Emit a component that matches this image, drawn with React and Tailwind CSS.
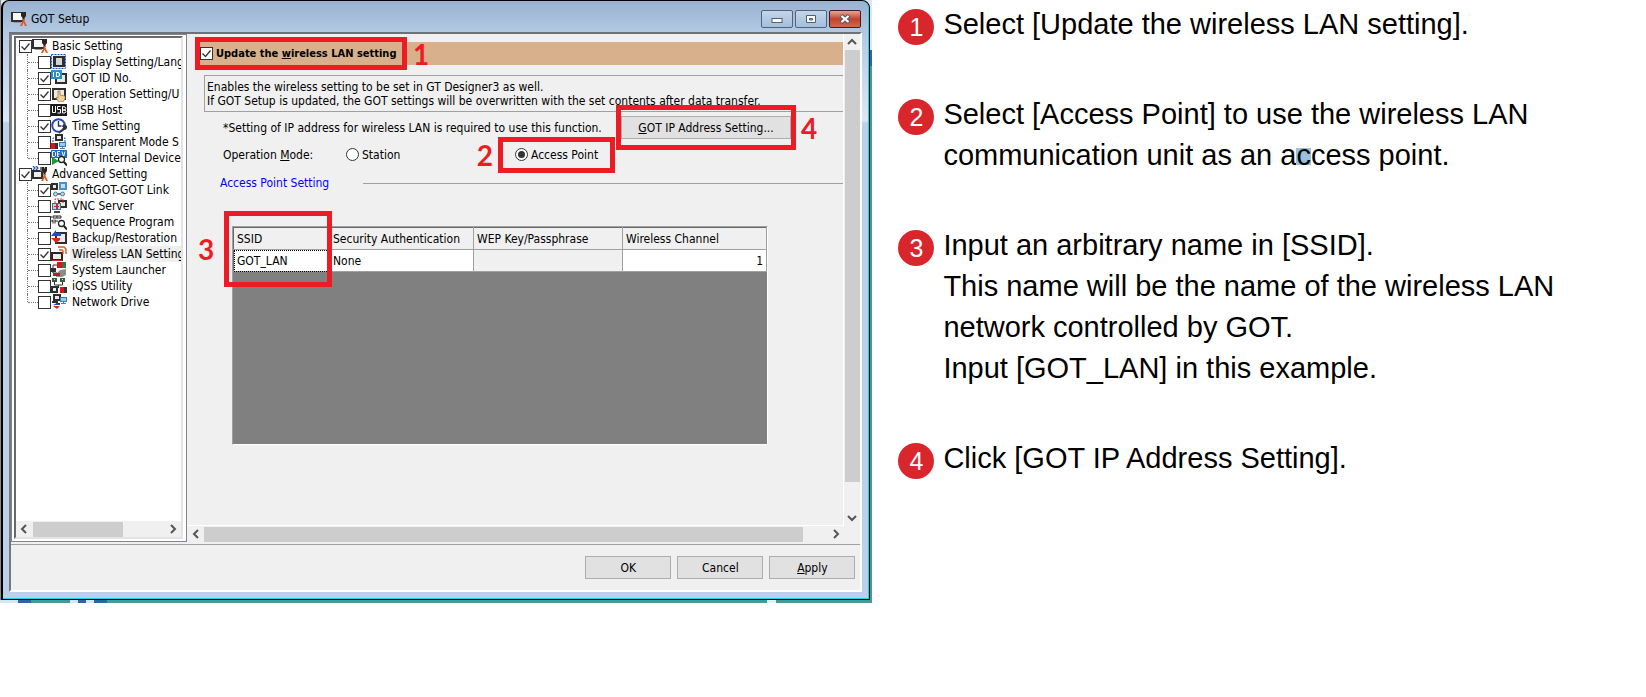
import React, { useState } from "react";
import clsx from "clsx";

// ------ tree icons (16 x 16) ------ //

const Got = ({ x = 1, y = 2, w = 13, h = 10 }) => (
  <>
    <rect x={x} y={y} width={w} height={h} fill="#2e2e2e" />
    <rect x={x + 2} y={y + 2} width={w - 4} height={h - 4} fill="#e9e9e9" />
  </>
);

const Wrench = ({ x = 8 }) => (
  <g transform={`translate(${x} 1)`}>
    <path d="M1 0h2v2h1v-2h2v4l-1.500 2v2h-2v-2l-1.500-2z" fill="#2b2320" />
    <path d="M2.500 7h2v2l2.500 5h-2l-1.500-3.500-1.500 3.500h-2l2.500-5z" fill="#e8501c" />
  </g>
);

const Lens = () => (
  <g>
    <circle cx="10.500" cy="9.500" r="3" fill="#fff" stroke="#222" strokeWidth="1.300" />
    <path d="M13 12l3 3.500" stroke="#222" strokeWidth="2" />
  </g>
);

const Pc = ({ x = 9, y = 8 }) => (
  <g transform={`translate(${x} ${y})`}>
    <rect width="7" height="5" fill="#3d78b8" />
    <rect x="1" y="1" width="5" height="3" fill="#8cd0f7" />
    <path d="M3 5h1v1h2v1h-5v-1h2z" fill="#6b7683" />
  </g>
);

const icons = {
  setup: (
    <>
      <path d="M0 1h13v10h-13z" fill="#2e2e2e" />
      <path d="M2 2h10v7h-10z" fill="#f6f6f6" />
      <path d="M2 11h8v1h-7z" fill="#9a9a9a" />
      <Wrench x={9} />
    </>
  ),
  advanced: (
    <>
      <path d="M0 4h11v9h-11z" fill="#2e2e2e" />
      <path d="M2 6h7v5h-7z" fill="#eee" />
      <path d="M1 0l2 2-2 2M4 0l2 2-2 2" fill="none" stroke="#1a49d6" strokeWidth="1.200" />
      <path d="M8 1l4 0 3 3-3 2-4-1z" fill="#7a746e" />
      <Wrench x={9} />
    </>
  ),
  display: (
    <>
      <rect x="0.500" y="0.500" width="14" height="14" fill="#e4ecff" stroke="#1b4fd8" strokeDasharray="2 1" />
      <rect x="2" y="2" width="12" height="11" fill="#2e2e2e" />
      <rect x="5" y="4" width="6" height="7" fill="#d5d5d5" />
    </>
  ),
  id: (
    <>
      <Got x={4} y={3} w={12} h={11} />
      <rect width="11" height="9" fill="#2c8fc9" />
      <path d="M2 2h1v5h-1zM5 2h2.500l1.500 1.500v2l-1.500 1.500h-2.500zM6 3v3h1.200l.8-.8v-1.400l-.8-.8z" fill="#fff" />
    </>
  ),
  operation: (
    <>
      <Got x={1} y={2} w={14} h={12} />
      <path d="M7 5h2v4l5 1v3l-2 3h-4l-3-4 1-1 1 1z" fill="#f7cf9b" stroke="#9c6a2e" strokeWidth="0.700" />
    </>
  ),
  usb: (
    <>
      <rect y="2" width="16" height="12" fill="#1c1c1c" />
      <path
        d="M1.500 4v6.500h3V4M9.500 4.500h-3v3h3v3.500h-3M11.500 4.500v6.500h2.500l1-1.500-1-1.500h-2.500 2.500l.8-1.500-.8-1.500z"
        fill="none"
        stroke="#fff"
      />
    </>
  ),
  time: (
    <>
      <circle cx="7.500" cy="7.500" r="6.300" fill="#fff" stroke="#2a49bd" strokeWidth="2" />
      <path d="M7.500 3v5h3" fill="none" stroke="#1f2f77" strokeWidth="1.400" />
      <path d="M8 15l5-5M12 8l1-1 3 2-2 2z" stroke="#333" strokeWidth="1.600" fill="#333" />
    </>
  ),
  transparent: (
    <>
      <path d="M2 8v-4h12v4" fill="none" stroke="#1b4fd8" strokeDasharray="2 1" />
      <Got x={4} y={0} w={8} h={7} />
      <rect y="9" width="4" height="6" fill="#d8141c" />
      <rect x="4" y="9" width="3" height="6" fill="#333" />
      <Pc x={8} y={8} />
    </>
  ),
  device: (
    <>
      <rect width="16" height="8" fill="#1c6fc7" />
      <path
        d="M1.500 1.500v5h2l1-1v-3l-1-1zM9 1.500h-2.500v5h2.500M6.500 4h2M11 1.500l1.500 5 1.500-5"
        fill="none"
        stroke="#fff"
      />
      <path d="M1 7l7 4-7 4z" fill="#1a9b35" />
      <Lens />
    </>
  ),
  link: (
    <>
      <Got x={0} y={1} w={7} h={7} />
      <rect x="8" y="0" width="8" height="8" fill="#4b8fce" />
      <rect x="10" y="2" width="4" height="4" fill="#b9e4ff" />
      <path d="M3 12h10" stroke="#56748f" strokeWidth="2" />
      <circle cx="4.500" cy="12" r="2" fill="#b9d5e6" stroke="#56748f" />
      <circle cx="11.500" cy="12" r="2" fill="#b9d5e6" stroke="#56748f" />
    </>
  ),
  vnc: (
    <>
      <Got x={7} y={2} w={9} h={8} />
      <path d="M4 5v-4h8v4" fill="none" stroke="#e22" strokeDasharray="2 1" />
      <rect x="1" y="5" width="9" height="7" fill="#4a6b8e" />
      <rect x="2" y="6" width="7" height="5" fill="#9edcff" />
      <path d="M5 6h2v5h-2zM3 8h5v1h-5z" fill="#d22" />
      <path d="M3 13h6v2h-6z" fill="#444" />
    </>
  ),
  sequence: (
    <>
      <path d="M0 3h3M5 3h2M9 3h2M0 7h2M4 7h3M3 1v4M5 1v4M7 1v4M9 1v4M2 5.500v4M4 5.500v4" stroke="#222" />
      <Lens />
    </>
  ),
  backup: (
    <>
      <Got x={4} y={2} w={12} h={12} />
      <path d="M0 6l5-6v3h5v3z" fill="#1b4fd8" />
      <path d="M0 8h9v2l-4 3z" fill="#e0251b" />
    </>
  ),
  wireless: (
    <>
      <rect y="6" width="12" height="9" fill="#2e2226" />
      <rect x="2" y="8" width="8" height="5" fill="#f5eaea" />
      <rect x="1" y="14" width="10" height="1" fill="#c22a2a" />
      <path d="M7 1h6l2 2v5M8 4h3l1 1v3" fill="none" stroke="#e8501c" strokeWidth="1.400" />
    </>
  ),
  launcher: (
    <>
      <path d="M2 3h5M2 3v8h4" stroke="#333" fill="none" />
      <path d="M0 6h5v4h-5z" fill="#2e2e2e" />
      <rect x="6" y="0" width="5" height="6" fill="#d8141c" />
      <rect x="11" y="0" width="4" height="6" fill="#2f7b3d" />
      <path d="M5 12l4-4 6-1v6l-4 2h-6z" fill="#8b8b8b" />
      <rect x="2" y="11" width="7" height="3" fill="#b3202a" />
    </>
  ),
  iqss: (
    <>
      <rect x="1" y="0" width="5" height="4" fill="#345d44" />
      <rect x="9" y="0" width="5" height="4" fill="#345d44" />
      <path d="M3 1h1v1h-1zM11 1h1v1h-1z" fill="#cfe9d6" />
      <path d="M3.500 4v3h8v-3M7.500 7v3" fill="none" stroke="#333" />
      <Got x={0} y={8} w={7} h={7} />
      <rect x="9" y="9" width="4" height="6" fill="#d8141c" />
      <rect x="13" y="9" width="3" height="6" fill="#333" />
    </>
  ),
  network: (
    <>
      <Got x={2} y={0} w={8} h={7} />
      <path d="M1 8h5v2h3" fill="none" stroke="#333" strokeWidth="2" />
      <Pc x={9} y={3} />
      <path d="M2 11h7l-3-2z" fill="#1b4fd8" />
      <path d="M2 12h7l-3 3z" fill="#e0251b" />
    </>
  ),
};

const Icon = ({ name }) => (
  <svg viewBox="0 0 16 16" className="size-4 shrink-0" aria-hidden="true">
    {icons[name]}
  </svg>
);

// ------ data ------ //

const tree = [
  {
    title: "Basic Setting",
    icon: "setup",
    items: [
      { label: "Display Setting/Lang", icon: "display", checked: false },
      { label: "GOT ID No.", icon: "id", checked: true },
      { label: "Operation Setting/U", icon: "operation", checked: true },
      { label: "USB Host", icon: "usb", checked: false },
      { label: "Time Setting", icon: "time", checked: true },
      { label: "Transparent Mode S", icon: "transparent", checked: false },
      { label: "GOT Internal Device", icon: "device", checked: false },
    ],
  },
  {
    title: "Advanced Setting",
    icon: "advanced",
    items: [
      { label: "SoftGOT-GOT Link", icon: "link", checked: true },
      { label: "VNC Server", icon: "vnc", checked: false },
      { label: "Sequence Program", icon: "sequence", checked: false },
      { label: "Backup/Restoration", icon: "backup", checked: false },
      { label: "Wireless LAN Setting", icon: "wireless", checked: true, active: true },
      { label: "System Launcher", icon: "launcher", checked: false },
      { label: "iQSS Utility", icon: "iqss", checked: false },
      { label: "Network Drive", icon: "network", checked: false },
    ],
  },
];

const steps = [
  ["Select [Update the wireless LAN setting]."],
  [
    "Select [Access Point] to use the wireless LAN",
    <>
      communication unit as an a<span className="bg-[linear-gradient(#9bc1dc,#9bc1dc)] bg-[length:100%_17px] bg-[position:0_9px] bg-no-repeat">c</span>cess point.
    </>,
  ],
  [
    "Input an arbitrary name in [SSID].",
    "This name will be the name of the wireless LAN",
    "network controlled by GOT.",
    "Input [GOT_LAN] in this example.",
  ],
  ["Click [GOT IP Address Setting]."],
];

// ------ small controls ------ //

const Check = ({ checked }) => (
  <span className="grid size-[13px] shrink-0">
    <input
      type="checkbox"
      defaultChecked={checked}
      className="peer col-start-1 row-start-1 size-[13px] appearance-none border border-[#333] bg-white"
    />
    <svg
      viewBox="0 0 13 13"
      className="pointer-events-none invisible col-start-1 row-start-1 size-[13px] peer-checked:visible"
    >
      <path d="M2.500 6.500l3 3 5-6" fill="none" stroke="#333" strokeWidth="1.300" />
    </svg>
  </span>
);

const Radio = ({ label, value, mode, setMode }) => (
  <label className="flex items-center gap-[3px]">
    <span className="grid size-[13px] place-items-center rounded-full border border-[#333] bg-white">
      <input
        type="radio"
        name="mode"
        value={value}
        checked={mode === value}
        onChange={() => setMode(value)}
        className="size-[7px] appearance-none rounded-full checked:bg-[#333]"
      />
    </span>
    {label}
  </label>
);

const arrows = {
  left: "M10 4l-4 4 4 4",
  right: "M6 4l4 4-4 4",
  up: "M4 10l4-4 4 4",
  down: "M4 6l4 4 4-4",
};

const Arrow = ({ dir }) => (
  <button type="button" aria-label={`Scroll ${dir}`} className="size-4 shrink-0">
    <svg viewBox="0 0 16 16" className="size-4">
      <path d={arrows[dir]} fill="none" stroke="#555" strokeWidth="2" />
    </svg>
  </button>
);

const Button = ({ children, className }) => (
  <button
    type="button"
    className={clsx("h-[23px] border border-[#adadad] bg-[#e1e1e1] text-center", className)}
  >
    {children}
  </button>
);

// red frame and number over the part that a step talks about
const Callout = ({ n, frame, number, className, children }) => (
  <div className={clsx("relative", className)}>
    {children}
    <span className={clsx("pointer-events-none absolute z-10 border-[5px] border-[#ed1c24]", frame)} />
    <span
      className={clsx(
        "absolute z-10 font-['Lato',sans-serif] text-[28px] leading-7 font-bold text-[#ed1c24]",
        number
      )}
    >
      {n}
    </span>
  </div>
);

// ------ window parts ------ //

const TitleBar = () => (
  <div className="flex h-[31px] items-center pt-[5px] pr-px pl-[2px]">
    <Icon name="setup" />
    <h1 className="ml-1 flex-1">GOT Setup</h1>
    <div className="flex gap-[2px]">
      <button
        type="button"
        aria-label="Minimize"
        className="grid h-[18px] w-8 place-items-center rounded-xs border border-[#53627a] bg-linear-to-b from-[#c3d6ea] via-[#b3c9e1] to-[#a3bfdd]"
      >
        <svg viewBox="0 0 12 12" className="size-3">
          <rect x="1" y="5.500" width="10" height="4" fill="#fff" stroke="#555d6b" />
        </svg>
      </button>
      <button
        type="button"
        aria-label="Maximize"
        className="grid h-[18px] w-8 place-items-center rounded-xs border border-[#53627a] bg-linear-to-b from-[#c3d6ea] via-[#b3c9e1] to-[#a3bfdd]"
      >
        <svg viewBox="0 0 12 12" className="size-3">
          <path d="M1.500 2.500h9v7h-9zM4.500 5.500h3v1.500h-3z" fill="#fff" fillRule="evenodd" stroke="#555d6b" />
        </svg>
      </button>
      <button
        type="button"
        aria-label="Close"
        className="grid h-[18px] w-8 place-items-center rounded-xs border border-[#4b1a20] bg-linear-to-b from-[#e5a296] via-[#c0432c] to-[#cf6a4d]"
      >
        <svg viewBox="0 0 12 12" className="size-3">
          <path d="M2 2.500l8 7M10 2.500l-8 7" stroke="#555d6b" strokeWidth="4.200" />
          <path d="M2.500 3l7 6M9.500 3l-7 6" stroke="#fff" strokeWidth="2.200" />
        </svg>
      </button>
    </div>
  </div>
);

const Tree = () => (
  <div className="w-[176px] shrink-0 border border-[#838390] bg-white p-[2px] pt-px">
    <div className="flex h-full w-[169px] flex-col border-2 border-t-[#696969] border-r-[#e3e3e3] border-b-[#e3e3e3] border-l-[#696969]">
      <ul className="flex-1 overflow-hidden whitespace-nowrap">
        {tree.map(({ title, icon, items }) => (
          <li key={title}>
            <label className="flex h-4 items-center pl-[3px]">
              <Check checked />
              <Icon name={icon} />
              <span className="ml-1">{title}</span>
            </label>
            <ul className="ml-[11px]">
              {items.map(({ label, icon, checked, active }) => (
                <li key={label} className="group flex h-4 items-center">
                  <span className="h-4 border-l border-dotted border-[#777] group-last:h-2 group-last:self-start" />
                  <span className="w-[10px] shrink-0 border-t border-dotted border-[#777]" />
                  <label className="flex h-4 flex-1 items-center">
                    <Check checked={checked} />
                    <Icon name={icon} />
                    <span className={clsx("ml-[3px] flex-1 pl-[2px] leading-4", active && "bg-[#efefef]")}>
                      {label}
                    </span>
                  </label>
                </li>
              ))}
            </ul>
          </li>
        ))}
      </ul>
      <div className="flex h-4 items-center bg-[#f0f0f0]">
        <Arrow dir="left" />
        <div className="flex-1 pl-px">
          <div className="h-[15px] w-[90px] bg-[#cdcdcd]" />
        </div>
        <Arrow dir="right" />
      </div>
    </div>
  </div>
);

const SsidTable = () => (
  <div className="h-[219px] w-[536px] border border-[#a0a0a0] border-r-white border-b-white bg-[#808080]">
    <table className="w-full table-fixed border-collapse border-t border-l border-[#696969] text-left">
      <thead>
        <tr className="h-[22px] bg-[#f0f0f0]">
          <th className="w-[97px] border-r border-b border-[#a0a0a0] pl-[3px] font-normal">SSID</th>
          <th className="w-[143px] border-r border-b border-[#a0a0a0] pl-[2px] font-normal">
            Security Authentication
          </th>
          <th className="w-[149px] border-r border-b border-[#a0a0a0] pl-[3px] font-normal">
            WEP Key/Passphrase
          </th>
          <th className="border-r border-b border-[#a0a0a0] pl-[3px] font-normal">Wireless Channel</th>
        </tr>
      </thead>
      <tbody>
        <tr className="h-[22px] bg-white">
          <td className="border-r border-b border-[#a0a0a0] pl-[3px] outline-1 -outline-offset-1 outline-black outline-dotted">
            GOT_LAN
          </td>
          <td className="border-r border-b border-[#a0a0a0] pl-[2px]">None</td>
          <td className="border-r border-b border-[#a0a0a0] bg-[#f0f0f0]" />
          <td className="border-r border-b border-[#a0a0a0] pr-[3px] text-right">1</td>
        </tr>
      </tbody>
    </table>
  </div>
);

const WirelessPane = () => {
  const [mode, setMode] = useState("ap");

  return (
    <div className="flex min-w-0 flex-1 flex-col">
      <div className="flex min-h-0 flex-1">
        {/* content */}
        <div className="min-w-0 flex-1 overflow-hidden border-r border-b border-white pt-2 pl-3 whitespace-nowrap">
          <div className="flex h-[23px] bg-[#d8b08c]">
            <Callout n="1" className="w-[204px]" frame="-inset-x-1 -inset-y-[5px]" number="top-[-2px] left-[214px]">
              <label className="flex h-[23px] items-center gap-[3px] pl-px text-[11px] font-bold">
                <Check checked />
                <span>
                  Update the <u>w</u>ireless LAN setting
                </span>
              </label>
            </Callout>
          </div>

          <p className="mt-[10px] ml-[5px] border border-r-0 border-[#a0a0a0] pt-1 pb-[3px] pl-[2px] leading-[14px]">
            Enables the wireless setting to be set in GT Designer3 as well.
            <br />
            If GOT Setup is updated, the GOT settings will be overwritten with the set contents after data transfer.
          </p>

          <div className="mt-1 ml-6 flex items-center">
            <p className="w-[398px]">*Setting of IP address for wireless LAN is required to use this function.</p>
            <Callout n="4" frame="-inset-x-[5px] -inset-y-[11px]" number="-top-[2px] left-[180px]">
              <Button className="w-[170px]">
                <u>G</u>OT IP Address Setting...
              </Button>
            </Callout>
          </div>

          <div className="mt-1 ml-6 flex h-[23px] items-center">
            <span className="w-[123px]">
              Operation <u>M</u>ode:
            </span>
            <div className="w-[169px]">
              <Radio label="Station" value="station" mode={mode} setMode={setMode} />
            </div>
            <Callout
              n="2"
              className="w-[95px]"
              frame="-top-[10px] -right-[5px] -bottom-[10px] -left-[17px]"
              number="-top-[6px] right-[117px]"
            >
              <Radio label="Access Point" value="ap" mode={mode} setMode={setMode} />
            </Callout>
          </div>

          <div className="mt-[9px] ml-[21px] flex items-center">
            <h2 className="w-[143px] text-[#0000ff]">Access Point Setting</h2>
            <hr className="flex-1 border-[#a0a0a0]" />
          </div>

          <Callout
            n="3"
            className="mt-[35px] ml-[33px] w-fit"
            frame="-top-[15px] -left-2 h-[76px] w-[108px]"
            number="top-[9px] -left-[34px]"
          >
            <SsidTable />
          </Callout>
        </div>

        {/* vertical scroll bar */}
        <div className="flex w-4 flex-col items-center">
          <Arrow dir="up" />
          <div className="flex-1">
            <div className="h-[94%] w-[15px] bg-[#cdcdcd]" />
          </div>
          <Arrow dir="down" />
        </div>
      </div>

      {/* horizontal scroll bar */}
      <div className="mr-4 flex h-4 items-center pl-px">
        <Arrow dir="left" />
        <div className="flex-1">
          <div className="h-[15px] w-[96%] bg-[#cdcdcd]" />
        </div>
        <Arrow dir="right" />
      </div>
    </div>
  );
};

const SetupWindow = () => (
  <div className="w-[53%] shrink-0 text-xs leading-4 text-black">
    <div className="border-l border-[#8a8a8a] bg-[linear-gradient(#dfe5ec_0_50px,#2f63a8_50px_66px,#459a96_66px)] pr-[2px]">
      <div className="rounded-t-lg border-t border-r border-b border-l-2 border-black bg-[linear-gradient(#98b2d0,#b4cbe5_34px,#dbe7f5_120px,#b9d1ea_122px)]">
        <div className="rounded-tr-lg border-r border-b border-[#20d0e8] px-[6px] pb-[6px]">
          <TitleBar />
          <div className="border-2 border-t-[#6d7278] border-r-white border-b-white border-l-[#75797f] bg-[#f0f0f0]">
            <div className="flex h-[508px]">
              <Tree />
              <WirelessPane />
            </div>
            <div className="mt-[2px] flex justify-end gap-[6px] border-t border-[#a0a0a0] pt-[11px] pr-[5px] pb-[11px]">
              <Button className="w-[86px]">OK</Button>
              <Button className="w-[86px]">Cancel</Button>
              <Button className="w-[86px]">
                <u>A</u>pply
              </Button>
            </div>
          </div>
        </div>
      </div>
    </div>
    {/* desktop showing under the window */}
    <div className="h-[3px] bg-[linear-gradient(90deg,#d5e6f2_0_18px,#2f63a8_18px_31px,#459a96_31px_70px,#d5e6f2_70px_78px,#2f63a8_78px_86px,#d5e6f2_86px_94px,#2f63a8_94px_107px,#459a96_107px_767px,#e8eef4_767px_776px,#459a96_776px)]" />
  </div>
);

const Steps = () => (
  <ol className="flex flex-1 flex-col gap-[49px] pt-1 pl-[26px] font-['Liberation_Sans',Arial,sans-serif] text-[29px] leading-[41px] text-black">
    {steps.map((lines, i) => (
      <li key={i} className="flex gap-[9px]">
        <span className="mt-[5px] grid size-9 shrink-0 place-items-center rounded-full bg-[#d9262c] text-[25px] leading-9 text-white">
          {i + 1}
        </span>
        <p>
          {lines.map((line, j) => (
            <span key={j} className="block">
              {line}
            </span>
          ))}
        </p>
      </li>
    ))}
  </ol>
);

function App() {
  return (
    <main className="flex min-h-screen items-start bg-white font-['DejaVu_Sans_Condensed','Noto_Sans',Tahoma,sans-serif]">
      <SetupWindow />
      <Steps />
    </main>
  );
}

export default App;
